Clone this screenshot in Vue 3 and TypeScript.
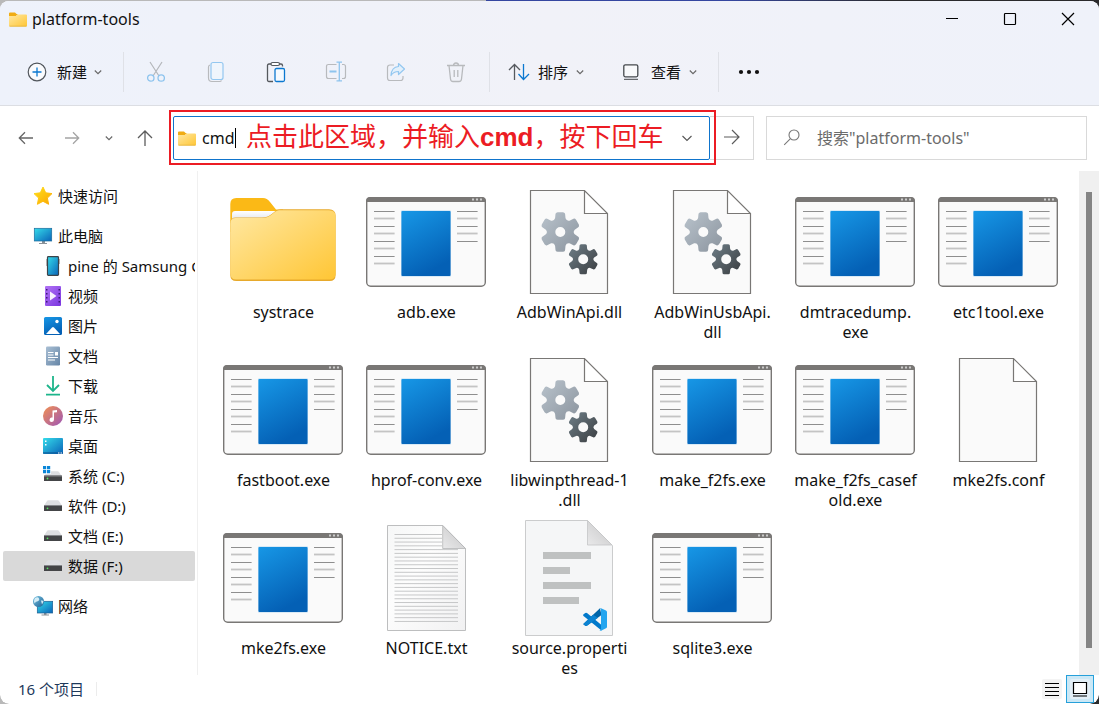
<script setup lang="ts">
import { ref } from 'vue'

type FileKind = 'folder' | 'exe' | 'dll' | 'blank' | 'text' | 'code'

interface FileEntry {
  label: string
  kind: FileKind
}

interface NavEntry {
  label: string
  icon: string
  level: 0 | 1
  spaced?: boolean
}

const address = ref('cmd')
const query = ref('')
const selected = ref('数据 (F:)')

const navItems: NavEntry[] = [
  { label: '快速访问', icon: 'star', level: 0 },
  { label: '此电脑', icon: 'pc', level: 0, spaced: true },
  { label: 'pine 的 Samsung Galaxy', icon: 'phone', level: 1 },
  { label: '视频', icon: 'video', level: 1 },
  { label: '图片', icon: 'picture', level: 1 },
  { label: '文档', icon: 'document', level: 1 },
  { label: '下载', icon: 'download', level: 1 },
  { label: '音乐', icon: 'music', level: 1 },
  { label: '桌面', icon: 'desktop', level: 1 },
  { label: '系统 (C:)', icon: 'sysdrive', level: 1 },
  { label: '软件 (D:)', icon: 'drive', level: 1 },
  { label: '文档 (E:)', icon: 'drive', level: 1 },
  { label: '数据 (F:)', icon: 'drive', level: 1 },
  { label: '网络', icon: 'network', level: 0, spaced: true },
]

const files: FileEntry[] = [
  { label: 'systrace', kind: 'folder' },
  { label: 'adb.exe', kind: 'exe' },
  { label: 'AdbWinApi.dll', kind: 'dll' },
  { label: 'AdbWinUsbApi.\ndll', kind: 'dll' },
  { label: 'dmtracedump.\nexe', kind: 'exe' },
  { label: 'etc1tool.exe', kind: 'exe' },
  { label: 'fastboot.exe', kind: 'exe' },
  { label: 'hprof-conv.exe', kind: 'exe' },
  { label: 'libwinpthread-1\n.dll', kind: 'dll' },
  { label: 'make_f2fs.exe', kind: 'exe' },
  { label: 'make_f2fs_casef\nold.exe', kind: 'exe' },
  { label: 'mke2fs.conf', kind: 'blank' },
  { label: 'mke2fs.exe', kind: 'exe' },
  { label: 'NOTICE.txt', kind: 'text' },
  { label: 'source.properti\nes', kind: 'code' },
  { label: 'sqlite3.exe', kind: 'exe' },
]

// Outline of a six-toothed cog with a round hole in the middle.
function cog(cx: number, cy: number, r: number, hole: number): string {
  const at = (deg: number, rad: number): string => {
    const a = ((deg - 90) * Math.PI) / 180
    return `${(cx + Math.cos(a) * rad).toFixed(2)} ${(cy + Math.sin(a) * rad).toFixed(2)}`
  }
  let d = `M${at(-21, r * 0.73)}`
  for (let t = 0; t < 360; t += 60) {
    d += `L${at(t - 15, r * 0.93)}Q${at(t - 14, r)} ${at(t - 8, r)}`
    d += `L${at(t + 8, r)}Q${at(t + 14, r)} ${at(t + 15, r * 0.93)}`
    d += `L${at(t + 21, r * 0.73)}Q${at(t + 30, r * 0.62)} ${at(t + 39, r * 0.73)}`
  }
  return `${d}ZM${cx - hole} ${cy}a${hole} ${hole} 0 1 0 ${hole * 2} 0a${hole} ${hole} 0 1 0 ${-hole * 2} 0Z`
}

const bigCog = cog(51.3, 50, 20, 5)
const smallCog = cog(74.2, 77.3, 15.2, 5)
const textLines = Array.from({ length: 24 }, (_, i) => ({ y: 16.5 + i * 3.78, end: i < 4 ? 76 : 92 }))
const leftLines = Array.from({ length: 8 }, (_, i) => i)
const rightLines = leftLines.slice(0, 5)
</script>

<template>
  <svg class="defs" width="0" height="0" aria-hidden="true">
    <defs>
      <linearGradient id="gBlue" x1="0" y1="0" x2="0.4" y2="1">
        <stop offset="0" stop-color="#1797e6" /><stop offset="1" stop-color="#0460b5" />
      </linearGradient>
      <linearGradient id="gCyan" x1="0" y1="0" x2="1" y2="1">
        <stop offset="0" stop-color="#35dcea" /><stop offset="1" stop-color="#0a63b8" />
      </linearGradient>
      <linearGradient id="gFolder" x1="0" y1="0" x2="1" y2="1">
        <stop offset="0" stop-color="#ffe8a3" /><stop offset="1" stop-color="#ffc635" />
      </linearGradient>
      <linearGradient id="gSheet" x1="0" y1="0" x2="0" y2="1">
        <stop offset="0" stop-color="#ffffff" /><stop offset="1" stop-color="#d5dae3" />
      </linearGradient>
      <linearGradient id="gPage" x1="0" y1="0" x2="1" y2="1">
        <stop offset="0" stop-color="#f6f7f7" /><stop offset="0.4" stop-color="#fdfdfd" /><stop offset="1" stop-color="#f1f1f2" />
      </linearGradient>
      <linearGradient id="gFold" x1="0" y1="1" x2="0.7" y2="0.3">
        <stop offset="0" stop-color="#e9e9ea" /><stop offset="1" stop-color="#cfcfd0" />
      </linearGradient>
      <linearGradient id="gCogA" x1="0" y1="0" x2="1" y2="1">
        <stop offset="0" stop-color="#b9c3cc" /><stop offset="1" stop-color="#8b949e" />
      </linearGradient>
      <linearGradient id="gCogB" x1="0" y1="0" x2="1" y2="1">
        <stop offset="0" stop-color="#6f7f88" /><stop offset="1" stop-color="#3a3d40" />
      </linearGradient>
      <linearGradient id="gStar" x1="0" y1="0" x2="1" y2="1">
        <stop offset="0" stop-color="#ffe01a" /><stop offset="1" stop-color="#fba703" />
      </linearGradient>
      <linearGradient id="gVideo" x1="0" y1="0" x2="1" y2="1">
        <stop offset="0" stop-color="#b173f5" /><stop offset="1" stop-color="#7a35df" />
      </linearGradient>
      <linearGradient id="gDoc" x1="0" y1="0" x2="1" y2="1">
        <stop offset="0" stop-color="#a9bfd4" /><stop offset="1" stop-color="#6585a6" />
      </linearGradient>
      <linearGradient id="gDown" x1="0" y1="0" x2="0" y2="1">
        <stop offset="0" stop-color="#2fc79a" /><stop offset="1" stop-color="#12a37d" />
      </linearGradient>
      <linearGradient id="gMusic" x1="0" y1="0" x2="1" y2="1">
        <stop offset="0" stop-color="#f39150" /><stop offset="1" stop-color="#9c55b8" />
      </linearGradient>
      <linearGradient id="gGlobe" x1="0" y1="0" x2="1" y2="1">
        <stop offset="0" stop-color="#78c4e2" /><stop offset="1" stop-color="#1e6295" />
      </linearGradient>
    </defs>

    <symbol id="minifolder" viewBox="0 0 20 16">
      <path d="M1 2.500A1 1 0 0 1 2 1.500h5l2 2h-8z" fill="#f0ac14" />
      <path d="M1 3h9l-2 2H1z" fill="#f0ac14" />
      <path d="M1 5h7l1.500-1.500H18a1 1 0 0 1 1 1V14.500a1 1 0 0 1-1 1H2a1 1 0 0 1-1-1z" fill="url(#gFolder)" />
      <path d="M1.500 15.200h17" stroke="#e5b23c" stroke-width=".8" />
    </symbol>
    <symbol id="chevron" viewBox="0 0 10 10">
      <path d="M1.800 3.500 5 6.700 8.200 3.500" fill="none" stroke="#6a6a6a" stroke-width="1.200" />
    </symbol>

    <symbol id="folder" viewBox="0 0 121 120">
      <path d="M7.300 42V22q0-6 6-6H40q4 0 7 4l6 7.500H60V50H7.300z" fill="#fbb916" />
      <path d="M9 42V32q0-3 3-3H54l-5 6.500-4 4.500z" fill="url(#gSheet)" />
      <path d="M7.300 41q0-5.500 5.500-5.500H39c5 0 8-2 11-4.500 3-2.800 5-3.700 8-3.700h48q6.600 0 6.600 6.500V93q0 6-6 6H13.300q-6 0-6-6z" fill="#e7a92b" />
      <path d="M7.300 41.500q0-5.500 5.500-5.500H39c5 0 8-2 11-4.500 3-2.800 5-3.200 8-3.200h48q6.600 0 6.600 6V91.500q0 6-6 6H13.300q-6 0-6-6z" fill="url(#gFolder)" />
    </symbol>

    <symbol id="exe" viewBox="0 0 121 120">
      <rect x=".7" y="15.700" width="118.600" height="88.600" rx="4" fill="#fafafa" stroke="#797775" stroke-width="1.400" />
      <path d="M0 20v-1q0-4 4-4H116q4 0 4 4v1z" fill="#797775" />
      <path d="M106 16.500h2v2h-2zM110 16.500h2v2h-2zM114 16.500h2v2h-2z" fill="#ccc" />
      <rect x="35" y="28.500" width="50" height="66" rx="1" fill="#b7d9f2" />
      <rect x="35.500" y="29" width="49" height="65" rx="1" fill="url(#gBlue)" />
      <g v-for="i in leftLines" :key="i">
        <rect x="8" :y="i % 2 ? 28.1 + i * 7.5 : 29 + i * 7.5" width="20.600" :height="i % 2 ? 1.8 : 1" :fill="i % 2 ? '#c4c4c4' : '#8e8e8e'" />
      </g>
      <g v-for="i in rightLines" :key="i">
        <rect x="91" :y="i % 2 ? 28.1 + i * 7.5 : 29 + i * 7.5" width="20.600" :height="i % 2 ? 1.8 : 1" :fill="i % 2 ? '#c4c4c4' : '#8e8e8e'" />
      </g>
    </symbol>

    <symbol id="blank" viewBox="0 0 121 120">
      <path d="M21.500 8.500H75.500L98.500 31.500V111.500H21.500zM75.500 8.500V31.500H98.500" fill="#fafafa" stroke="#797775" stroke-width="1.200" />
    </symbol>

    <symbol id="dll" viewBox="0 0 121 120">
      <path d="M21.500 8.500H75.500L98.500 31.500V111.500H21.500zM75.500 8.500V31.500H98.500" fill="#fafafa" stroke="#797775" stroke-width="1.200" />
      <path :d="bigCog" fill="url(#gCogA)" fill-rule="evenodd" />
      <path :d="smallCog" fill="url(#gCogB)" fill-rule="evenodd" />
    </symbol>

    <symbol id="text" viewBox="0 0 121 120">
      <path d="M21.500 7.500H76.700L99.500 30.500V112.500H21.500z" fill="url(#gPage)" stroke="#bdbebf" />
      <path v-for="l in textLines" :key="l.y" :d="`M28.500 ${l.y}H${l.end}`" stroke="#c6c7c8" />
      <path d="M76.700 7.500V30.500H99.500z" fill="url(#gFold)" stroke="#b4b5b6" stroke-width=".8" />
    </symbol>

    <symbol id="code" viewBox="0 0 121 120">
      <path d="M16.500 2.500H78.500L103.500 27.500V117.500H16.500z" fill="#f5f6f7" stroke="#cbcccd" />
      <path d="M78.500 2.500V27H103z" fill="url(#gFold)" stroke="#c4c5c6" stroke-width=".8" />
      <path d="M34 34h48v7H34zM34 49h27v7H34zM34 64h48v7H34zM34 79h36v7H34z" fill="#bfc1c1" />
      <path d="M74.300 96.500 76.300 95q1-.6 2 .2L92.500 107V112.500L74.500 98q-.8-.7-.2-1.500z" fill="#0179cb" />
      <path d="M74.300 106 91 90.300 92.500 97 78.300 107.500q-1 .8-2 .2l-1.800-1.200z" fill="#0065a9" />
      <path d="M74.300 106 84 96.800 89 99.800 78.300 107.500q-1 .8-2 .2z" fill="#0b83d2" />
      <path d="M92 90.200 97 92.400q1 .5 1 1.600V108.700q0 1.100-1 1.600L92 112.700q-.9.200-1.500-.5 1.500.4 1.500-1.200V92q0-1.600-1.500-1.200.6-.8 1.500-.6z" fill="#24a5ef" />
    </symbol>

    <symbol id="star" viewBox="0 0 20 20">
      <path d="m10 1 2.700 5.800 6.300.8-4.600 4.400 1.200 6.300-5.600-3-5.600 3 1.200-6.300L1 7.600l6.300-.8z" fill="url(#gStar)" stroke="url(#gStar)" stroke-linejoin="round" />
    </symbol>
    <symbol id="pc" viewBox="0 0 20 20">
      <path d="M9 15h3v2h2v1H6v-1h3z" fill="#8a9299" />
      <rect x="1.300" y="2.300" width="17.400" height="12.700" fill="url(#gCyan)" stroke="#1c6c9c" stroke-width=".7" />
    </symbol>
    <symbol id="phone" viewBox="0 0 20 20">
      <path d="M3 3h1v7H3zM16 3h1v5h-1z" fill="#bbb" />
      <rect x="4.500" y=".7" width="11" height="18.600" rx=".8" fill="url(#gCyan)" stroke="#3c444a" stroke-width="1.200" />
    </symbol>
    <symbol id="video" viewBox="0 0 20 20">
      <rect x="2" y="0" width="16" height="20" rx="1" fill="url(#gVideo)" />
      <path d="M3 3h1.500v1.500H3zm0 4h1.500v1.500H3zm0 4h1.500v1.500H3zm0 4h1.500v1.500H3zM15.500 3H17v1.500h-1.500zm0 4H17v1.500h-1.500zm0 4H17v1.500h-1.500zm0 4H17v1.500h-1.500z" fill="#3b1a78" />
      <path d="M7 5.500 13.500 10 7 14.500z" fill="#f7f0ff" />
    </symbol>
    <symbol id="picture" viewBox="0 0 20 20">
      <rect x="1" y="1" width="18" height="18" rx="1.500" fill="url(#gBlue)" />
      <path d="m3 18 6-6.500q1-1 2 0L17 18z" fill="#fff" />
      <circle cx="14" cy="5.500" r="1.700" fill="#fff" />
    </symbol>
    <symbol id="document" viewBox="0 0 20 20">
      <rect x="3" y=".5" width="14" height="19" rx="1.200" fill="url(#gDoc)" />
      <path d="M5 6.500h5.500M5 9h5.500M5 11.500h10M5 14h7" stroke="#fff" stroke-width="1.200" />
      <path d="M12 6h3v3.500h-3z" fill="#fff" />
    </symbol>
    <symbol id="download" viewBox="0 0 20 20">
      <path d="M10 0v14.500M4 9l6 6 6-6M3 18.700h14" fill="none" stroke="#1db58b" stroke-width="1.800" />
    </symbol>
    <symbol id="music" viewBox="0 0 20 20">
      <circle cx="10" cy="10" r="10" fill="url(#gMusic)" />
      <path d="M9.500 4.500 14 4v2.200l-3 .4v7a2.200 2.200 0 1 1-1.500-2z" fill="#fff" />
    </symbol>
    <symbol id="desktop" viewBox="0 0 20 20">
      <rect x="0" y="2" width="20" height="16" rx="1" fill="url(#gCyan)" />
      <path d="M2 4.500h1.500V6H2zm0 3.500h1.500v1.500H2z" fill="#fff" />
      <path d="M0 17h20" stroke="#084c8c" />
      <path d="M15 17h1.500M17.500 17H19" stroke="#fff" />
    </symbol>
    <symbol id="drive" viewBox="0 0 20 20">
      <path d="M1 9.500 4 5q.4-.7 1.200-.7h9.600q.8 0 1.200.7l3 4.500z" fill="#dedfe2" />
      <rect x="1" y="9" width="18" height="6" rx=".6" fill="#444547" />
      <path d="M1 9.500h18" stroke="#85878a" />
      <circle cx="4.500" cy="12.300" r=".9" fill="#58e364" />
    </symbol>
    <symbol id="sysdrive" viewBox="0 0 20 20">
      <path d="M1 10.500 4 6q.4-.7 1.200-.7h9.600q.8 0 1.200.7l3 4.500z" fill="#dedfe2" />
      <rect x="1" y="9.500" width="18" height="5.500" rx=".6" fill="#444547" />
      <path d="M1 10h18" stroke="#85878a" />
      <circle cx="4.500" cy="12.500" r=".9" fill="#58e364" />
      <path d="M0 0h8v8H0z" fill="#fff" />
      <path d="M0 0h3.200v3.200H0zM4 0h3.200v3.200H4zM0 4h3.200v3.200H0zM4 4h3.200v3.200H4z" fill="#0a86d8" />
    </symbol>
    <symbol id="network" viewBox="0 0 20 20">
      <path d="M11 17h2.500v1.500H16v1H8.500v-1H11z" fill="#8a9299" />
      <rect x="4.300" y="5.300" width="15.400" height="11.700" fill="url(#gCyan)" stroke="#1c5f92" stroke-width=".7" />
      <circle cx="5.500" cy="5.500" r="5.500" fill="url(#gGlobe)" />
      <path d="M2 2Q5 .5 6 2.500T4 5.500q-2 0-2 2Q0 5.500 2 2zM8 4.500q2-.5 2.500 1L9 8.500z" fill="#d4edf7" />
    </symbol>
  </svg>

  <main class="window">
    <header class="titlebar">
      <svg class="mini"><use href="#minifolder" /></svg>
      <h1 class="title">platform-tools</h1>
      <div class="controls">
        <button class="control" type="button" aria-label="最小化">
          <svg width="14" height="14"><path d="M1 6.500h12" stroke="#000" stroke-width="1.200" /></svg>
        </button>
        <button class="control" type="button" aria-label="最大化">
          <svg width="14" height="14"><rect x="1.500" y="1.500" width="11" height="11" rx=".8" fill="none" stroke="#000" stroke-width="1.200" /></svg>
        </button>
        <button class="control" type="button" aria-label="关闭">
          <svg width="14" height="14"><path d="m1 1 12 12M13 1 1 13" stroke="#000" stroke-width="1.200" /></svg>
        </button>
      </div>
    </header>

    <div class="toolbar" role="toolbar">
      <button class="command" type="button">
        <svg width="20" height="20" fill="none">
          <circle cx="10" cy="10" r="8.800" fill="#fafbfd" stroke="#51565c" stroke-width="1.200" />
          <path d="M10 5.500v9M5.500 10h9" stroke="#0b78d0" stroke-width="1.300" />
        </svg>
        <span>新建</span>
        <svg class="chev"><use href="#chevron" /></svg>
      </button>
      <span class="divider"></span>
      <div class="tools">
        <button class="tool" type="button" aria-label="剪切" disabled>
          <svg width="20" height="22" fill="none">
            <path d="M4 1 13 15M16 1 7 15" stroke="#b4b7bb" stroke-width="1.200" />
            <circle cx="4.800" cy="17" r="3.200" stroke="#8ec4ee" stroke-width="1.300" />
            <circle cx="15.200" cy="17" r="3.200" stroke="#8ec4ee" stroke-width="1.300" />
          </svg>
        </button>
        <button class="tool" type="button" aria-label="复制" disabled>
          <svg width="20" height="22" fill="none">
            <path d="M4 4q-1.500.5-1.500 2v11q0 3.500 3.500 3.500h7.500q1.500 0 2-1" stroke="#b8babd" stroke-width="1.200" />
            <rect x="5" y="1.500" width="12" height="17" rx="2" fill="#eff5fc" stroke="#93c7f0" stroke-width="1.200" />
          </svg>
        </button>
        <button class="tool" type="button" aria-label="粘贴">
          <svg width="20" height="22" fill="none">
            <path d="M7 20.500H3q-1.500 0-1.500-1.500V4.500Q1.500 3 3 3h2M13 3h2q1.500 0 1.500 1.500V5.500" stroke="#55595e" stroke-width="1.300" />
            <rect x="5" y="1.500" width="8.500" height="3" rx="1.500" fill="#fff" stroke="#55595e" stroke-width="1.200" />
            <rect x="9" y="7.500" width="9.500" height="13" rx="1.500" fill="#f5faff" stroke="#0b78d0" stroke-width="1.300" />
          </svg>
        </button>
        <button class="tool" type="button" aria-label="重命名" disabled>
          <svg width="22" height="22" fill="none">
            <path d="M11.500 3.500H3.500q-2 0-2 2v10q0 2 2 2h8M17 3.500h1.500q2 0 2 2v10q0 2-2 2H17" stroke="#b8babd" stroke-width="1.200" />
            <path d="M4.500 10.500h7" stroke="#8ec4ee" stroke-width="2" />
            <path d="M14.300 1.500v18M11.500 1.200h5.500M11.500 19.800h5.500" stroke="#8ec4ee" stroke-width="1.300" />
          </svg>
        </button>
        <button class="tool" type="button" aria-label="共享" disabled>
          <svg width="20" height="22" fill="none">
            <path d="M8 4H4Q1.500 4 1.500 6.500v10.500q0 2.500 2.500 2.500h10.500q2.500 0 2.500-2.500V15" stroke="#b8babd" stroke-width="1.200" />
            <path d="M12.500 2.500 18.500 8 12.500 13.500V10.500Q7.500 10.500 5 14.500 5.500 6 12.500 5.500z" fill="#e3f0fb" stroke="#93c7f0" stroke-width="1.200" stroke-linejoin="round" />
          </svg>
        </button>
        <button class="tool" type="button" aria-label="删除" disabled>
          <svg width="20" height="22" fill="none" stroke="#b8babd" stroke-width="1.300">
            <path d="M1 4.500h18M7.500 4.500Q7.500 2 10 2t2.500 2.500M3 4.500 4.500 18q.2 2.500 2.500 2.500h6q2.300 0 2.500-2.500L17 4.500M8.200 9v7M11.800 9v7" />
          </svg>
        </button>
      </div>
      <span class="divider"></span>
      <button class="command sort" type="button">
        <svg width="22" height="20" fill="none">
          <path d="M6.500 18V2.500M1 8l5.500-5.500L12 8" stroke="#55595e" stroke-width="1.300" />
          <path d="M15.500 2v15.500M10.500 12l5 5.500 5.500-5.500" stroke="#0b78d0" stroke-width="1.300" />
        </svg>
        <span>排序</span>
        <svg class="chev"><use href="#chevron" /></svg>
      </button>
      <button class="command view" type="button">
        <svg width="18" height="20" fill="none">
          <rect x="1.800" y="2.800" width="14" height="12" rx="1.500" fill="#f8f9fb" stroke="#44484c" stroke-width="1.300" />
          <path d="M2 17.300h14" stroke="#66696d" stroke-width="1.300" />
        </svg>
        <span>查看</span>
        <svg class="chev"><use href="#chevron" /></svg>
      </button>
      <span class="divider"></span>
      <button class="more" type="button" aria-label="更多">
        <svg width="22" height="6" fill="#111"><circle cx="3" cy="3" r="2.100" /><circle cx="11" cy="3" r="2.100" /><circle cx="19" cy="3" r="2.100" /></svg>
      </button>
    </div>

    <div class="navbar">
      <button class="nav back" type="button" aria-label="后退">
        <svg width="18" height="18" fill="none" stroke="#666" stroke-width="1.300"><path d="M16 9H2.500M8 3.300 2.300 9 8 14.700" /></svg>
      </button>
      <button class="nav forward" type="button" aria-label="前进">
        <svg width="18" height="18" fill="none" stroke="#a4a4a4" stroke-width="1.300"><path d="M2 9h13.500M10 3.300 15.700 9 10 14.700" /></svg>
      </button>
      <button class="nav recent" type="button" aria-label="最近浏览的位置">
        <svg class="chev"><use href="#chevron" /></svg>
      </button>
      <button class="nav up" type="button" aria-label="上一级">
        <svg width="18" height="18" fill="none" stroke="#5c5c5c" stroke-width="1.300"><path d="M9 17V2M2 9l7-7 7 7" /></svg>
      </button>

      <form class="address" @submit.prevent>
        <div class="field">
          <svg class="mini"><use href="#minifolder" /></svg>
          <input v-model="address" class="path" type="text" aria-label="地址" />
          <span class="caret"></span>
          <button class="drop" type="button" aria-label="以前的位置">
            <svg width="12" height="10" fill="none"><path d="m1.500 3 4.500 4.500L10.500 3" stroke="#555" stroke-width="1.100" /></svg>
          </button>
          <div class="callout">点击此区域，并输入<b>cmd</b>，按下回车</div>
        </div>
        <button class="go" type="submit" aria-label="转到">
          <svg width="18" height="18" fill="none" stroke="#5c5c5c" stroke-width="1.200"><path d="M1 8h15M9 1l7 7-7 7" /></svg>
        </button>
      </form>

      <label class="search">
        <svg width="18" height="18" fill="none" stroke="#777" stroke-width="1.100"><circle cx="11" cy="6" r="5" /><path d="m7.200 9.800-6 6" /></svg>
        <input v-model="query" class="query" type="text" aria-label="搜索" placeholder="搜索&quot;platform-tools&quot;" />
      </label>
    </div>

    <div class="body">
      <nav class="sidebar">
        <button
          v-for="item in navItems"
          :key="item.label"
          type="button"
          class="place"
          :class="{ nested: item.level === 1, spaced: item.spaced, active: item.label === selected }"
          @click="selected = item.label"
        >
          <svg class="placeicon"><use :href="'#' + item.icon" /></svg>
          <span>{{ item.label }}</span>
        </button>
      </nav>

      <section class="files">
        <figure v-for="file in files" :key="file.label" class="file">
          <svg class="fileicon"><use :href="'#' + file.kind" /></svg>
          <figcaption class="name">{{ file.label }}</figcaption>
        </figure>
      </section>

      <div class="scrollbar"><div class="thumb"></div></div>
    </div>

    <footer class="status">
      <span class="count">16 个项目</span>
      <div class="modes">
        <button class="mode" type="button" aria-label="详细信息">
          <svg width="20" height="20"><rect width="20" height="20" rx="2" fill="#f4f4f4" /><path d="M3 4.500h14M3 8.500h14M3 12.500h14M3 16.500h14" stroke="#000" /></svg>
        </button>
        <button class="mode on" type="button" aria-label="大图标">
          <svg width="20" height="20"><rect width="20" height="20" rx="2" fill="#e3eff7" /><path d="M3.500 3.500h13v11h-13zM3 17h14" fill="#fff" stroke="#000" stroke-width="1.200" /></svg>
        </button>
      </div>
    </footer>
  </main>
</template>

<style>
body {
  margin: 0;
  background: linear-gradient(90deg, #b9b9b9 0 486px, #3547a0 486px 730px, #2a2a2c 890px);
}
</style>

<style scoped>
.defs {
  position: absolute;
}
.window {
  box-sizing: border-box;
  display: flex;
  flex-direction: column;
  min-height: 100vh;
  border-top: 1px solid transparent;
  border-radius: 9px;
  overflow: hidden;
  background: #fff;
  background-clip: padding-box;
  color: #111;
  font: 15px/20px "Noto Sans", "Noto Sans CJK SC", sans-serif;
}
button,
input {
  border: 0;
  padding: 0;
  margin: 0;
  background: none;
  color: inherit;
  font: inherit;
  outline: none;
}
button {
  display: flex;
  align-items: center;
  justify-content: center;
}
svg {
  flex: none;
}
.mini {
  width: 20px;
  height: 16px;
}
.chev {
  width: 10px;
  height: 10px;
}

.titlebar {
  display: flex;
  align-items: center;
  height: 35px;
  padding: 0 2px 2px 8px;
  background: linear-gradient(90deg, #eef2fb, #f1f2f8 50%, #eff2fa);
}
.title {
  flex: 1;
  margin: 0 0 0 4px;
  font-size: 16px;
  font-weight: 400;
}
.controls {
  display: flex;
}
.control {
  width: 58px;
  height: 34px;
}

.toolbar {
  display: flex;
  align-items: center;
  height: 67px;
  padding-left: 27px;
  border-bottom: 1px solid #dcdee3;
  background: linear-gradient(90deg, #eef2fb, #f1f2f8 50%, #eff2fa);
}
.command {
  gap: 10px;
  height: 40px;
}
.command .chev {
  margin-left: -4px;
}
.divider {
  width: 1px;
  height: 40px;
  background: #dfe1e7;
}
.command + .divider {
  margin-left: 20px;
}
.tools {
  display: flex;
  margin: 0 3px 0 2px;
}
.tool {
  width: 60px;
  height: 40px;
}
.command.sort {
  gap: 8px;
  margin-left: 18px;
}
.command.sort .chev {
  margin-left: -1px;
}
.command.view {
  gap: 11px;
  margin-left: 37px;
}
.more {
  width: 60px;
  height: 40px;
}

.navbar {
  display: flex;
  align-items: center;
  height: 63px;
  padding: 0 12px 2px 0;
}
.nav {
  flex: none;
  height: 36px;
}
.back {
  width: 52px;
}
.forward {
  width: 40px;
}
.recent {
  width: 34px;
}
.up {
  width: 38px;
}
.address {
  display: flex;
  flex: 1;
  min-width: 0;
  margin: 0 12px 0 9px;
}
.field {
  position: relative;
  display: flex;
  flex: 1;
  align-items: center;
  height: 42px;
  padding-left: 3px;
  border: 1px solid #0f74cc;
  border-radius: 2px;
}
.path {
  width: 33px;
  margin-left: 5px;
  height: 30px;
  font-size: 16px;
}
.caret {
  width: 1px;
  height: 20px;
  background: #000;
}
.drop {
  width: 44px;
  height: 40px;
  margin-left: auto;
}
.callout {
  position: absolute;
  inset: -7px -7px -6px -5px;
  display: flex;
  align-items: center;
  padding-left: 75px;
  border: 2px solid #ec1c24;
  color: #ec1c24;
  font: 26px/40px "Liberation Sans", "Noto Sans CJK SC", sans-serif;
  white-space: nowrap;
  pointer-events: none;
}
.go {
  width: 44px;
  border: 1px solid #d9d9d9;
  border-left: 0;
}
.search {
  display: flex;
  align-items: center;
  box-sizing: border-box;
  width: 321px;
  height: 44px;
  padding: 0 16px;
  border: 1px solid #d9d9d9;
}
.query {
  flex: 1;
  min-width: 0;
  height: 30px;
  margin-left: 16px;
  font-size: 16px;
}
.query::placeholder {
  color: #6b6b6b;
  opacity: 1;
}

.body {
  display: flex;
  flex: 1 1 0;
  min-height: 0;
}
.sidebar {
  box-sizing: border-box;
  flex: none;
  width: 198px;
  padding: 10px 2px 0 3px;
  border-right: 1px solid #f0f0f0;
}
.place {
  justify-content: flex-start;
  gap: 5px;
  width: 100%;
  height: 30px;
  padding-left: 30px;
  border-radius: 2px;
  overflow: hidden;
  white-space: nowrap;
}
.nested {
  padding-left: 40px;
}
.spaced {
  margin-top: 10px;
}
.active {
  background: #d9d9d9;
}
.placeicon {
  width: 20px;
  height: 20px;
}
.files {
  display: grid;
  flex: 1;
  grid-template-columns: repeat(auto-fill, 143px);
  grid-auto-rows: 168px;
  padding: 11px 0 0 14px;
}
.file {
  display: flex;
  flex-direction: column;
  align-items: center;
  margin: 0;
}
.fileicon {
  width: 121px;
  height: 120px;
}
.name {
  font-size: 16px;
  text-align: center;
  white-space: pre-line;
}
.scrollbar {
  box-sizing: border-box;
  width: 20px;
  padding: 21px 7px 27px;
  background: #f0f0f0;
}
.thumb {
  height: 100%;
  background: #858585;
}

.status {
  display: flex;
  align-items: center;
  justify-content: space-between;
  height: 28px;
  padding: 0 5px 1px 18px;
}
.count {
  padding-right: 12px;
  border-right: 1px solid #ececec;
  color: #1e395b;
  line-height: 14px;
}
.modes {
  display: flex;
}
.mode {
  box-sizing: border-box;
  width: 28px;
  height: 28px;
  border: 1px solid transparent;
}
.on {
  border-color: #26a0da;
  background: #cbe8f6;
}
</style>
